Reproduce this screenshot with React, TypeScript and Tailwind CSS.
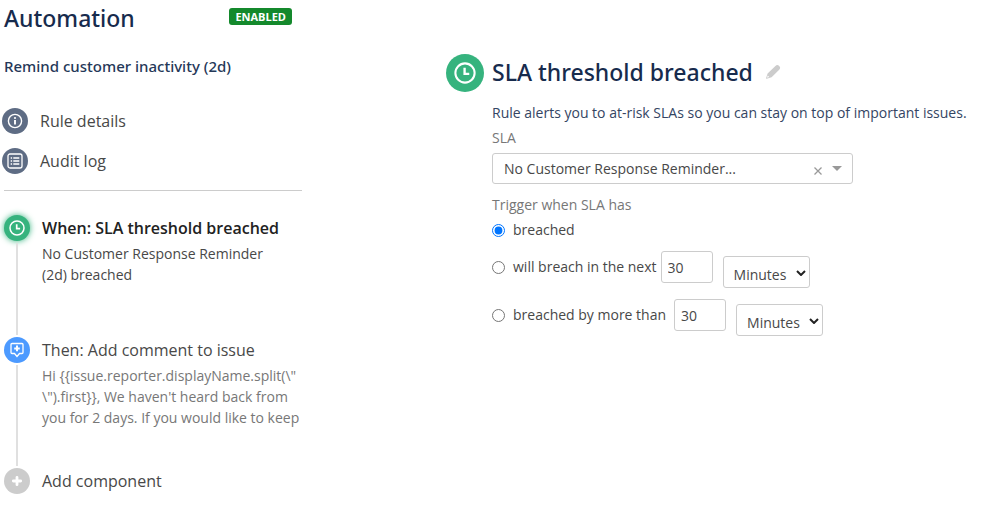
import { ReactNode } from 'react'
import clsx from 'clsx'

interface IconProps {
    className?: string
}

function ClockIcon({ className }: IconProps) {
    return (
        <svg viewBox="0 0 16 16" className={className} fill="none" stroke="currentColor" strokeWidth="1.5">
            <circle cx="8" cy="8" r="7" />
            <path d="M7.7 4.2v4.4h3.4" strokeWidth="1.7" />
        </svg>
    )
}

function InfoIcon({ className }: IconProps) {
    return (
        <svg viewBox="0 0 16 16" className={className} fill="none" stroke="currentColor" strokeWidth="1.4">
            <circle cx="8" cy="8" r="6.6" />
            <path d="M8 7v4.5" strokeWidth="1.9" />
            <circle cx="8" cy="5" r="1.1" fill="currentColor" stroke="none" />
        </svg>
    )
}

function ListIcon({ className }: IconProps) {
    return (
        <svg viewBox="0 0 16 16" className={className} fill="none" stroke="currentColor" strokeWidth="1.3">
            <rect x="1" y="1" width="14" height="14" rx="2" />
            <path d="M3.7 5h1.4M3.7 8h1.4M3.7 11h1.4M6.3 5h6M6.3 8h6M6.3 11h6" />
        </svg>
    )
}

function CommentIcon({ className }: IconProps) {
    return (
        <svg viewBox="0 0 16 16" className={className} fill="none" stroke="currentColor" strokeWidth="1.3">
            <path d="M3 1.5h10a1 1 0 0 1 1 1v8a1 1 0 0 1-1 1h-2.5L8 14.5l-2.5-3H3a1 1 0 0 1-1-1v-8a1 1 0 0 1 1-1z" />
            <path d="M8 3.6v5.6M5.2 6.4h5.6" strokeWidth="2" />
        </svg>
    )
}

function PlusIcon({ className }: IconProps) {
    return (
        <svg viewBox="0 0 16 16" className={className} fill="none" stroke="currentColor" strokeWidth="3.2">
            <path d="M8 3.8v8.4M3.8 8h8.4" strokeLinecap="round" />
        </svg>
    )
}

function PencilIcon({ className }: IconProps) {
    return (
        <svg viewBox="0 0 16 16" className={className} fill="currentColor">
            <path d="M10.4 1.9a2.7 2.7 0 0 1 3.8 0 2.7 2.7 0 0 1 0 3.8L6.6 13.2l-4.9 1.5a.5.5 0 0 1-.6-.6l1.5-4.6zM2.8 11.6l-.8 2.2 2.2-.8z" fillRule="evenodd" />
        </svg>
    )
}

function RoundIcon({ className, children }: { className: string; children: ReactNode }) {
    return (
        <span className={clsx('flex size-[26px] shrink-0 items-center justify-center rounded-full text-white', className)}>
            {children}
        </span>
    )
}

interface StepProps {
    icon: ReactNode
    title: string
    active?: boolean
    last?: boolean
    className?: string
    children?: ReactNode
}

function Step({ icon, title, active = false, last = false, className, children }: StepProps) {
    return (
        <li className="flex gap-3">
            <div className="flex flex-col items-center">
                {icon}
                {!last && <span className="my-0.5 w-0.5 flex-1 bg-[#e0e0e0]" />}
            </div>
            <div className={clsx('min-w-0 flex-1', className)}>
                <button
                    type="button"
                    className={clsx('block text-left text-base leading-[26px]', active ? 'font-semibold text-[#222]' : 'text-[#484848]')}
                >
                    {title}
                </button>
                {children}
            </div>
        </li>
    )
}

function DelayRow({ id, label, className }: { id: string; label: string; className: string }) {
    return (
        <div className="flex h-9 items-start">
            <div className={clsx('flex h-8 items-center gap-2', className)}>
                <input type="radio" name="trigger" id={id} className="size-[13px]" />
                <label htmlFor={id}>{label}</label>
            </div>
            <input
                type="text"
                defaultValue="30"
                aria-label={`${label} amount`}
                className="h-8 w-[52px] rounded-[3px] border border-[#ccc] px-1.5"
            />
            <div className="relative mt-[5px] ml-2.5">
                <select
                    aria-label={`${label} unit`}
                    className="h-8 w-[87px] appearance-none rounded-[3px] border border-[#ccc] bg-white pt-1.5 pl-2.5"
                >
                    <option>Minutes</option>
                    <option>Hours</option>
                    <option>Days</option>
                </select>
                <svg
                    viewBox="0 0 10 6"
                    className="pointer-events-none absolute top-3.5 right-1 h-1.5 w-2.5 text-[#222]"
                    fill="none"
                    stroke="currentColor"
                    strokeWidth="2"
                >
                    <path d="M1 1l4 4 4-4" />
                </svg>
            </div>
        </div>
    )
}

function Sidebar() {
    return (
        <aside className="w-[302px] shrink-0">
            <div className="flex items-start justify-between pr-2.5 pl-1">
                <h1 className="font-['Noto_Sans','Open_Sans',sans-serif] text-[23px] leading-9 font-medium text-[#172b4d]">
                    Automation
                </h1>
                <span className="mt-2 rounded-[3px] bg-[#14892c] px-1.5 text-[11px] leading-[17px] font-bold text-white">
                    ENABLED
                </span>
            </div>
            <h2 className="mt-[18px] pl-1 font-['Noto_Sans','Open_Sans',sans-serif] text-[15px] leading-6 font-medium text-[#253858]">
                Remind customer inactivity (2d)
            </h2>

            <nav className="mt-[30px] flex flex-col gap-3.5 pl-0.5 text-base leading-[26px] text-[#484848]">
                <a href="#details" className="flex items-center gap-3">
                    <RoundIcon className="bg-[#5e6c84]">
                        <InfoIcon className="size-4" />
                    </RoundIcon>
                    Rule details
                </a>
                <a href="#audit" className="flex items-center gap-3">
                    <RoundIcon className="bg-[#5e6c84]">
                        <ListIcon className="size-4" />
                    </RoundIcon>
                    Audit log
                </a>
            </nav>

            <hr className="mt-4 mb-6 ml-1 border-[#ccc]" />

            <ol className="pl-1">
                <Step
                    title="When: SLA threshold breached"
                    active
                    className="pb-13"
                    icon={
                        <RoundIcon className="bg-[#36b37e] shadow-[0_0_6px_#36b37e]">
                            <ClockIcon className="size-4" />
                        </RoundIcon>
                    }
                >
                    <p className="mt-0.5 pr-8 text-sm leading-[21px] text-[#484848]">
                        No Customer Response Reminder (2d) breached
                    </p>
                </Step>
                <Step
                    title="Then: Add comment to issue"
                    className="pb-10"
                    icon={
                        <RoundIcon className="bg-[#4c9aff]">
                            <CommentIcon className="size-4" />
                        </RoundIcon>
                    }
                >
                    <p className="mt-0.5 text-sm leading-[21px] text-[#777]">
                        {'Hi {{issue.reporter.displayName.split(\\" \\").first}}, We haven\'t heard back from you for 2 days. If you would like to keep'}
                    </p>
                </Step>
                <Step
                    title="Add component"
                    last
                    icon={
                        <RoundIcon className="bg-[#ccc]">
                            <PlusIcon className="size-3.5" />
                        </RoundIcon>
                    }
                />
            </ol>
        </aside>
    )
}

export default function App() {
    return (
        <div className="flex min-h-screen gap-36 bg-white font-['Open_Sans','Noto_Sans',sans-serif]">
            <Sidebar />

            <main className="flex min-w-0 flex-1 items-start gap-2 pt-[54px] text-sm text-[#484848]">
                <span className="flex size-[38px] shrink-0 items-center justify-center rounded-full bg-[#36b37e] text-white">
                    <ClockIcon className="size-[22px]" />
                </span>
                <div className="min-w-0 flex-1">
                    <div className="flex items-center gap-3">
                        <h2 className="font-['Noto_Sans','Open_Sans',sans-serif] text-[23px] leading-9 font-medium text-[#172b4d]">
                            SLA threshold breached
                        </h2>
                        <button type="button" aria-label="Rename" className="text-[#ccc]">
                            <PencilIcon className="size-4" />
                        </button>
                    </div>
                    <p className="mt-3 leading-[22px] text-[#344563]">
                        Rule alerts you to at-risk SLAs so you can stay on top of important issues.
                    </p>

                    <label htmlFor="sla" className="mt-[3px] block leading-[22px] text-[#777]">
                        SLA
                    </label>
                    <div className="mt-1 flex h-[31px] max-w-[361px] items-center rounded-[3px] border border-[#ccc] pr-2.5">
                        <select id="sla" className="h-full min-w-0 flex-1 appearance-none bg-transparent pl-[11px]">
                            <option>No Customer Response Reminder...</option>
                        </select>
                        <button type="button" aria-label="Clear" className="pt-1 text-[#999]">
                            <svg viewBox="0 0 8 8" className="size-2" fill="none" stroke="currentColor" strokeWidth="1.3">
                                <path d="M0.5 0.5l7 7M7.5 0.5l-7 7" />
                            </svg>
                        </button>
                        <svg viewBox="0 0 10 5" className="ml-2.5 h-[5px] w-2.5 text-[#999]" fill="currentColor">
                            <path d="M0 0h10L5 5z" />
                        </svg>
                    </div>

                    <fieldset className="mt-2.5">
                        <legend className="leading-[22px] text-[#777]">Trigger when SLA has</legend>
                        <div className="mt-[3px] mb-2.5 flex h-[22px] items-center gap-2">
                            <input type="radio" name="trigger" id="breached" defaultChecked className="size-[13px]" />
                            <label htmlFor="breached">breached</label>
                        </div>
                        <div className="flex flex-col gap-3">
                            <DelayRow id="next" label="will breach in the next" className="pr-1" />
                            <DelayRow id="over" label="breached by more than" className="pr-2" />
                        </div>
                    </fieldset>
                </div>
            </main>
        </div>
    )
}
